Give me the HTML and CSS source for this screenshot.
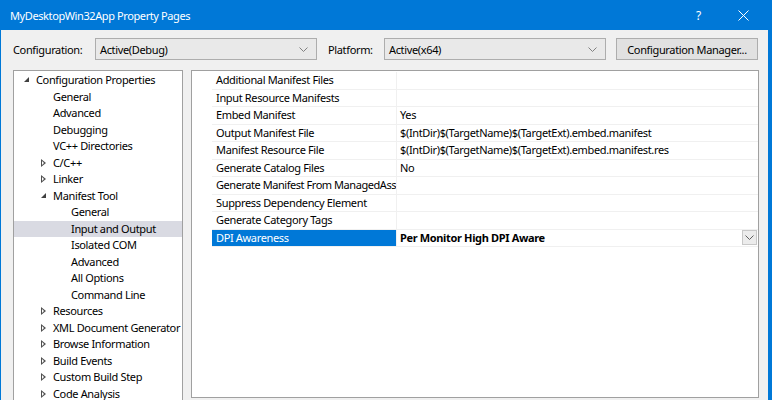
FILE: index.html
```html
<!DOCTYPE html>
<html lang="en">
<head>
  <meta charset="UTF-8" />
  <title>MyDesktopWin32App Property Pages</title>
  <link rel="stylesheet" href="styles.css">
</head>
<body>
  <div class="window">
    <div class="titlebar">
      <span class="title">MyDesktopWin32App Property Pages</span>
      <span class="help">?</span>
      <span class="close">
        <svg width="11" height="11" viewBox="0 0 11 11"><path d="M0.5 0.5 L10.5 10.5 M10.5 0.5 L0.5 10.5" stroke="#fff" stroke-width="1"/></svg>
      </span>
    </div>

    <div class="content">
      <div class="toolbar">
        <span class="lbl lbl-config">Configuration:</span>
        <div class="combo">
          <span>Active(Debug)</span>
          <svg class="chev" width="9" height="5" viewBox="0 0 9 5"><path d="M0.5 0.5 L4.5 4.5 L8.5 0.5" fill="none" stroke="#808080"/></svg>
        </div>
        <span class="lbl lbl-platform">Platform:</span>
        <div class="combo">
          <span>Active(x64)</span>
          <svg class="chev" width="9" height="5" viewBox="0 0 9 5"><path d="M0.5 0.5 L4.5 4.5 L8.5 0.5" fill="none" stroke="#808080"/></svg>
        </div>
        <button class="btn">Configuration Manager...</button>
      </div>

      <div class="panes">
        <div class="tree">
          <div class="node l0"><span class="tw open"></span>Configuration Properties</div>
          <div class="node l1"><span class="tw"></span>General</div>
          <div class="node l1"><span class="tw"></span>Advanced</div>
          <div class="node l1"><span class="tw"></span>Debugging</div>
          <div class="node l1"><span class="tw"></span>VC++ Directories</div>
          <div class="node l1"><span class="tw closed"></span>C/C++</div>
          <div class="node l1"><span class="tw closed"></span>Linker</div>
          <div class="node l1"><span class="tw open"></span>Manifest Tool</div>
          <div class="node l2"><span class="tw"></span>General</div>
          <div class="node l2 selected"><span class="tw"></span>Input and Output</div>
          <div class="node l2"><span class="tw"></span>Isolated COM</div>
          <div class="node l2"><span class="tw"></span>Advanced</div>
          <div class="node l2"><span class="tw"></span>All Options</div>
          <div class="node l2"><span class="tw"></span>Command Line</div>
          <div class="node l1"><span class="tw closed"></span>Resources</div>
          <div class="node l1"><span class="tw closed"></span>XML Document Generator</div>
          <div class="node l1"><span class="tw closed"></span>Browse Information</div>
          <div class="node l1"><span class="tw closed"></span>Build Events</div>
          <div class="node l1"><span class="tw closed"></span>Custom Build Step</div>
          <div class="node l1"><span class="tw closed"></span>Code Analysis</div>
        </div>

        <div class="grid">
          <div class="row"><div class="name">Additional Manifest Files</div><div class="value"></div></div>
          <div class="row"><div class="name">Input Resource Manifests</div><div class="value"></div></div>
          <div class="row"><div class="name">Embed Manifest</div><div class="value">Yes</div></div>
          <div class="row"><div class="name">Output Manifest File</div><div class="value">$(IntDir)$(TargetName)$(TargetExt).embed.manifest</div></div>
          <div class="row"><div class="name">Manifest Resource File</div><div class="value">$(IntDir)$(TargetName)$(TargetExt).embed.manifest.res</div></div>
          <div class="row"><div class="name">Generate Catalog Files</div><div class="value">No</div></div>
          <div class="row"><div class="name long">Generate Manifest From ManagedAss</div><div class="value"></div></div>
          <div class="row"><div class="name">Suppress Dependency Element</div><div class="value"></div></div>
          <div class="row"><div class="name">Generate Category Tags</div><div class="value"></div></div>
          <div class="row active">
            <div class="name">DPI Awareness</div>
            <div class="value">
              <b>Per Monitor High DPI Aware</b>
              <span class="drop">
                <svg width="9" height="5" viewBox="0 0 9 5"><path d="M0.5 0.5 L4.5 4.5 L8.5 0.5" fill="none" stroke="#606060"/></svg>
              </span>
            </div>
          </div>
        </div>
      </div>
    </div>
  </div>
</body>
</html>
```

FILE: styles.css
```css
body {
  margin: 0;
  padding: 0;
  font-family: "Noto Sans", "Open Sans", sans-serif;
  font-size: 11px;
  letter-spacing: -0.35px;
  color: #000;
  background-color: #f0f0f0;
}

.window {
  width: 772px;
  height: 400px;
  box-sizing: border-box;
  border-left: 1px solid #0078d7;
  border-right: 4px solid #0078d7;
  background-color: #f0f0f0;
  overflow: hidden;
}

.titlebar {
  height: 30px;
  background-color: #0078d7;
  color: white;
  display: flex;
  align-items: center;
  padding-left: 9px;
  font-size: 11px;
  letter-spacing: -0.4px;
}

.title {
  flex: 1;
}

.help {
  width: 14px;
  margin-right: 28px;
  font-size: 12px;
}

.close {
  width: 11px;
  margin-right: 19px;
  display: flex;
}

.content {
  padding: 8px 0 0 12px;
}

.toolbar {
  display: flex;
  align-items: center;
  height: 22px;
}

.lbl-config {
  width: 82px;
}

.lbl-platform {
  width: 56px;
  margin-left: 11px;
}

.combo {
  width: 222px;
  height: 22px;
  box-sizing: border-box;
  border: 1px solid #adadad;
  background-color: #e9e9e9;
  display: flex;
  align-items: center;
  justify-content: space-between;
  padding: 0 8px 0 4px;
}

.btn {
  margin-left: 10px;
  width: 142px;
  height: 22px;
  border: 1px solid #adadad;
  background-color: #e1e1e1;
  font-family: inherit;
  font-size: 11px;
  letter-spacing: -0.35px;
  color: #000;
  padding: 0;
}

.panes {
  display: flex;
  gap: 8px;
  margin-top: 10px;
}

.tree {
  width: 170px;
  height: 340px;
  box-sizing: border-box;
  border: 1px solid #a0a0a0;
  border-bottom: none;
  background-color: white;
  padding-top: 1px;
}

.node {
  height: 16.5px;
  line-height: 16.5px;
  display: flex;
  align-items: center;
  white-space: nowrap;
}

.l0 { padding-left: 8px; }
.l1 { padding-left: 25px; }
.l2 { padding-left: 43px; }

.node.selected {
  background-color: #d9dae2;
}

.tw {
  width: 14px;
  height: 16px;
  flex-shrink: 0;
  position: relative;
}

.tw.open::after {
  content: "";
  position: absolute;
  left: 2px;
  top: 5px;
  border-style: solid;
  border-width: 0 0 5px 5px;
  border-color: transparent transparent #404040 transparent;
}

.tw.closed::after {
  content: "";
  position: absolute;
  left: 2px;
  top: 4px;
  width: 0;
  height: 0;
  border-style: solid;
  border-width: 4px 0 4px 5px;
  border-color: transparent transparent transparent #505050;
}

.tw.closed::before {
  content: "";
  position: absolute;
  left: 3px;
  top: 6px;
  z-index: 1;
  border-style: solid;
  border-width: 2px 0 2px 2.5px;
  border-color: transparent transparent transparent white;
}

.grid {
  width: 568px;
  height: 328px;
  box-sizing: border-box;
  border: 1px solid #a0a0a0;
  background-color: white;
  padding: 1px 0 0 20px;
}

.row {
  display: flex;
  height: 17.5px;
  box-sizing: border-box;
  border-bottom: 1px solid #f0f0f0;
}

.name {
  width: 185px;
  box-sizing: border-box;
  padding-left: 4px;
  border-right: 1px solid #f0f0f0;
  white-space: nowrap;
  overflow: hidden;
  line-height: 16.5px;
}

.name.long {
  letter-spacing: -0.45px;
}

.value {
  flex: 1;
  padding-left: 3px;
  white-space: nowrap;
  line-height: 16.5px;
  display: flex;
  justify-content: space-between;
  align-items: center;
}

.row.active .name {
  background-color: #0078d7;
  color: white;
}

.row.active .value b {
  font-weight: bold;
}

.drop {
  width: 15px;
  height: 15px;
  box-sizing: border-box;
  border: 1px solid #c8c8c8;
  background-color: #ececec;
  display: flex;
  align-items: center;
  justify-content: center;
  margin-right: 1px;
}
```
